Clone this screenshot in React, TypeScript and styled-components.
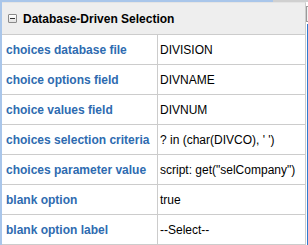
import styled, { createGlobalStyle } from "styled-components";

const GlobalStyle = createGlobalStyle`
  html, body {
    margin: 0;
    padding: 0;
    background: #ffffff;
  }
  body {
    font-family: "Liberation Sans", Arial, sans-serif;
  }
`;

const Frame = styled.div`
  width: 308px;
  height: 245px;
  overflow: hidden;
  display: flex;
  flex-direction: column;
  box-sizing: border-box;
  border-left: 2px solid #a9c6ea;
`;

const TopStrip = styled.div`
  display: flex;
  height: 2px;
  flex-shrink: 0;
`;

const StripPart = styled.div<{ $color: string; $width?: number }>`
  background: ${({ $color }) => $color};
  flex: ${({ $width }) => ($width ? `0 0 ${$width}px` : "1")};
`;

const Body = styled.div`
  display: flex;
  flex: 1;
  min-height: 0;
`;

const Panel = styled.div`
  width: 304px;
  flex-shrink: 0;
  box-sizing: border-box;
  border-right: 1px solid #cccccc;
  border-top: 1px solid #e4e4e4;
`;

const Header = styled.div`
  display: flex;
  align-items: center;
  gap: 6px;
  height: 31px;
  padding-left: 6px;
  background: #eeeeee;
  border-bottom: 1px solid #cccccc;
  font-size: 12px;
  font-weight: bold;
  color: #000000;
`;

const Toggle = styled.span`
  width: 9px;
  height: 9px;
  box-sizing: border-box;
  border: 1px solid #8a8a8a;
  border-radius: 1px;
  background: linear-gradient(#ffffff, #e2e2e2);
  display: flex;
  align-items: center;
  justify-content: center;

  &::after {
    content: "";
    width: 5px;
    height: 1px;
    background: #333333;
  }
`;

const Row = styled.div`
  display: grid;
  grid-template-columns: 156px 1fr;
  height: 30px;
  box-sizing: border-box;
  border-bottom: 1px solid #cccccc;
  font-size: 12px;
`;

const Label = styled.div`
  display: flex;
  align-items: center;
  padding-left: 4px;
  border-right: 1px solid #cccccc;
  color: #2e6bb0;
  font-weight: bold;
  white-space: nowrap;
`;

const Value = styled.div`
  display: flex;
  align-items: center;
  padding-left: 2px;
  color: #000000;
  white-space: nowrap;
  overflow: hidden;
`;

const Gutter = styled.div`
  flex: 1;
  display: flex;
  flex-direction: column;
  align-items: flex-end;
  padding-top: 4px;
  gap: 2px;
`;

const ScrollCap = styled.div`
  width: 3px;
  height: 16px;
  box-sizing: border-box;
  border: 1px solid #9a9a9a;
  border-right: none;
  background: #f2f2f2;
`;

const ScrollLine = styled.div`
  width: 2px;
  flex: 1;
  background: #2f7bd1;
`;

const rows: [string, string][] = [
  ["choices database file", "DIVISION"],
  ["choice options field", "DIVNAME"],
  ["choice values field", "DIVNUM"],
  ["choices selection criteria", "? in (char(DIVCO), ' ')"],
  ["choices parameter value", 'script: get("selCompany")'],
  ["blank option", "true"],
  ["blank option label", "--Select--"],
];

const App = () => {
  return (
    <>
      <GlobalStyle />
      <Frame>
        <TopStrip>
          <StripPart $color="#a9c6ea" />
          <StripPart $color="#d0d0d0" $width={35} />
        </TopStrip>
        <Body>
          <Panel>
            <Header>
              <Toggle />
              Database-Driven Selection
            </Header>
            {rows.map(([label, value]) => (
              <Row key={label}>
                <Label>{label}</Label>
                <Value>{value}</Value>
              </Row>
            ))}
          </Panel>
          <Gutter>
            <ScrollCap />
            <ScrollLine />
          </Gutter>
        </Body>
      </Frame>
    </>
  );
};

export default App;
